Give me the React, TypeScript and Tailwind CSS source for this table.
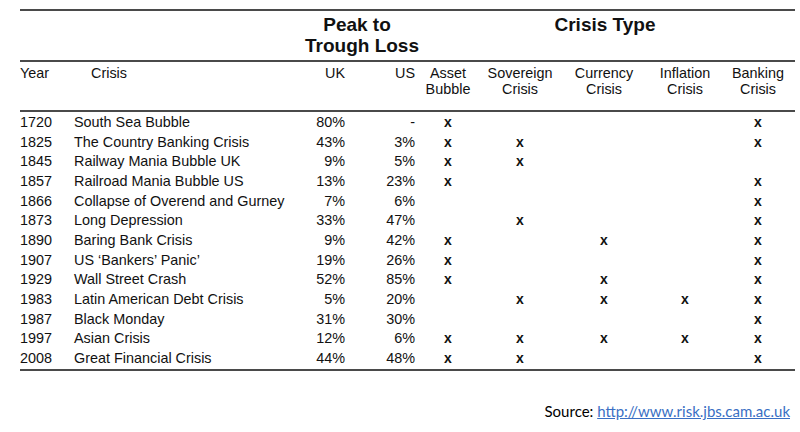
import React from "react";

type Row = { y: string; c: string; uk: string; us: string; m: boolean[] };

const rows: Row[] = [
  { y: "1720", c: "South Sea Bubble", uk: "80%", us: "-", m: [true, false, false, false, true] },
  { y: "1825", c: "The Country Banking Crisis", uk: "43%", us: "3%", m: [true, true, false, false, true] },
  { y: "1845", c: "Railway Mania Bubble UK", uk: "9%", us: "5%", m: [true, true, false, false, false] },
  { y: "1857", c: "Railroad Mania Bubble US", uk: "13%", us: "23%", m: [true, false, false, false, true] },
  { y: "1866", c: "Collapse of Overend and Gurney", uk: "7%", us: "6%", m: [false, false, false, false, true] },
  { y: "1873", c: "Long Depression", uk: "33%", us: "47%", m: [false, true, false, false, true] },
  { y: "1890", c: "Baring Bank Crisis", uk: "9%", us: "42%", m: [true, false, true, false, true] },
  { y: "1907", c: "US \u2018Bankers\u2019 Panic\u2019", uk: "19%", us: "26%", m: [true, false, false, false, true] },
  { y: "1929", c: "Wall Street Crash", uk: "52%", us: "85%", m: [true, false, true, false, true] },
  { y: "1983", c: "Latin American Debt Crisis", uk: "5%", us: "20%", m: [false, true, true, true, true] },
  { y: "1987", c: "Black Monday", uk: "31%", us: "30%", m: [false, false, false, false, true] },
  { y: "1997", c: "Asian Crisis", uk: "12%", us: "6%", m: [true, true, true, true, true] },
  { y: "2008", c: "Great Financial Crisis", uk: "44%", us: "48%", m: [true, true, false, false, true] },
];

const cols = "grid grid-cols-[54px_231px_40px_70px_66px_78px_90px_72px_74px]";

export default function App() {
  return (
    <div
      className="w-[800px] h-[432px] bg-white text-[#111] overflow-hidden"
      style={{ fontFamily: '"Liberation Sans", Arial, sans-serif' }}
    >
      <div className="ml-[20px] w-[775px] pt-[9px]">
        <div className="h-[2px] bg-[#4a4a4a]" />
        <div className={`${cols} h-[49px] text-[19px] font-bold leading-[21px]`}>
          <div className="col-start-3 col-span-2 text-center pt-[3px] pr-[6px] whitespace-nowrap">
            Peak to
            <br />
            Trough Loss
          </div>
          <div className="col-start-5 col-span-5 text-center pt-[3px]">Crisis Type</div>
        </div>
        <div className="h-[2px] bg-[#4a4a4a]" />
        <div className={`${cols} h-[48px] text-[14.4px] leading-[16px] pt-[3px]`}>
          <div>Year</div>
          <div className="pl-[17px]">Crisis</div>
          <div className="text-right">UK</div>
          <div className="text-right">US</div>
          <div className="text-center">
            Asset
            <br />
            Bubble
          </div>
          <div className="text-center">
            Sovereign
            <br />
            Crisis
          </div>
          <div className="text-center">
            Currency
            <br />
            Crisis
          </div>
          <div className="text-center">
            Inflation
            <br />
            Crisis
          </div>
          <div className="text-center">
            Banking
            <br />
            Crisis
          </div>
        </div>
        <div className="h-[2px] bg-[#4a4a4a]" />
        <div className="flex flex-col">
          {rows.map((r) => (
            <div key={r.y} className={`${cols} h-[19.7px] items-center text-[14.4px] leading-[16px]`}>
              <div>{r.y}</div>
              <div className="whitespace-nowrap">{r.c}</div>
              <div className="text-right">{r.uk}</div>
              <div className="text-right">{r.us}</div>
              {r.m.map((v, i) => (
                <div key={i} className="text-center font-bold text-[14px]">
                  {v ? "x" : ""}
                </div>
              ))}
            </div>
          ))}
        </div>
        <div className="h-[2px] bg-[#4a4a4a] mt-[1px]" />
      </div>
      <div
        className="flex justify-end pr-[10px] mt-[31px] text-[15px] leading-[18px]"
        style={{ fontFamily: 'Lato, "Open Sans", sans-serif' }}
      >
        <span className="text-black">Source:&nbsp;</span>
        <span className="text-[#3a6fc4] underline">http://www.risk.jbs.cam.ac.uk</span>
      </div>
    </div>
  );
}
